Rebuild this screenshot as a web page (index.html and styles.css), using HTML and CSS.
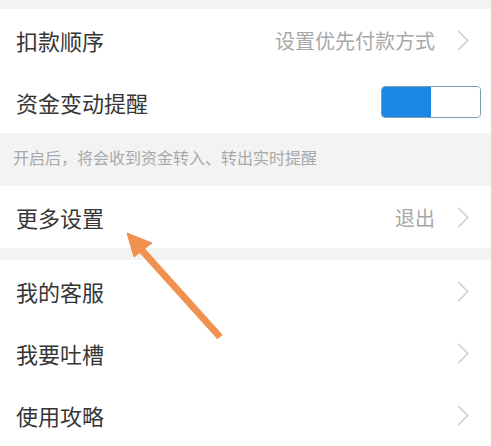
FILE: index.html
```html
<!DOCTYPE html>
<html lang="zh-CN">
<head>
    <meta charset="UTF-8">
    <meta name="viewport" content="width=device-width, initial-scale=1.0">
    <title>设置</title>
    <link rel="stylesheet" href="styles.css">
</head>
<body>
    <div class="page">
        <div class="group first">
            <div class="row">
                <span class="label">扣款顺序</span>
                <span class="value">设置优先付款方式</span>
                <svg class="chevron" viewBox="0 0 12 22"><polyline points="1,1 11,11 1,21"/></svg>
            </div>
            <div class="row">
                <span class="label">资金变动提醒</span>
                <div class="toggle"><span class="toggle-on"></span><span class="toggle-off"></span></div>
            </div>
        </div>
        <div class="hint">开启后，将会收到资金转入、转出实时提醒</div>
        <div class="group">
            <div class="row">
                <span class="label">更多设置</span>
                <span class="value">退出</span>
                <svg class="chevron" viewBox="0 0 12 22"><polyline points="1,1 11,11 1,21"/></svg>
            </div>
        </div>
        <div class="group gap">
            <div class="row">
                <span class="label">我的客服</span>
                <svg class="chevron" viewBox="0 0 12 22"><polyline points="1,1 11,11 1,21"/></svg>
            </div>
            <div class="row">
                <span class="label">我要吐槽</span>
                <svg class="chevron" viewBox="0 0 12 22"><polyline points="1,1 11,11 1,21"/></svg>
            </div>
            <div class="row">
                <span class="label">使用攻略</span>
                <svg class="chevron" viewBox="0 0 12 22"><polyline points="1,1 11,11 1,21"/></svg>
            </div>
        </div>

        <!-- annotation arrow drawn over the list -->
        <svg class="pointer" viewBox="0 0 491 446">
            <line x1="220" y1="337" x2="138" y2="246"/>
            <polygon points="127,233 152,243 134,257"/>
        </svg>
    </div>
</body>
</html>
```

FILE: styles.css
```css
body {
    margin: 0;
    background-color: #f3f3f3;
    font-family: "Noto Sans CJK SC", "Noto Sans", sans-serif;
}

.page {
    position: relative;
    width: 491px;
    height: 446px;
    overflow: hidden;
}

.group {
    background-color: #fff;
}

.group.first {
    margin-top: 9px;
}

.group.gap {
    margin-top: 12px;
}

.row {
    height: 62px;
    display: flex;
    align-items: center;
    padding: 0 22px 0 16px;
}

.label {
    flex: 1;
    font-size: 22px;
    color: #363636;
}

.value {
    font-size: 20px;
    color: #a8a8a8;
    margin-right: 22px;
}

.chevron {
    width: 12px;
    height: 21px;
    fill: none;
    stroke: #c9c9c9;
    stroke-width: 1.4;
}

.toggle {
    display: flex;
    width: 98px;
    height: 30px;
    margin-right: -12px;
    border: 1px solid #7d9db3;
    border-radius: 4px;
    overflow: hidden;
}

.toggle-on {
    flex: 1;
    background-color: #1a86e6;
}

.toggle-off {
    flex: 1;
    background-color: #fff;
}

.hint {
    height: 53px;
    padding: 12px 13px 0;
    box-sizing: border-box;
    font-size: 16px;
    color: #a9a9a9;
}

.pointer {
    position: absolute;
    left: 0;
    top: 0;
    width: 491px;
    height: 446px;
    fill: #f0914f;
    stroke: #f0914f;
}

.pointer line {
    stroke-width: 7;
}
```
